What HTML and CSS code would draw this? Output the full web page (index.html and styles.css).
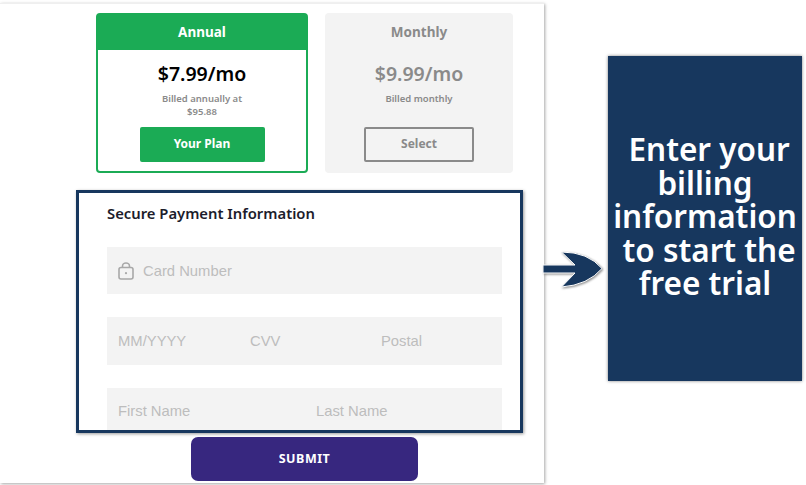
FILE: index.html
```html
<!DOCTYPE html>
<html lang="en">
<head>
    <meta charset="UTF-8">
    <meta name="viewport" content="width=device-width, initial-scale=1.0">
    <title>Secure Payment</title>
    <link rel="stylesheet" href="styles.css">
</head>
<body>
    <div class="checkout">
        <div class="plans">
            <div class="plan plan-active">
                <div class="plan-name">Annual</div>
                <div class="plan-price">$7.99/mo</div>
                <div class="plan-billed">Billed annually at<br>$95.88</div>
                <div class="plan-btn">Your Plan</div>
            </div>
            <div class="plan plan-other">
                <div class="plan-name">Monthly</div>
                <div class="plan-price">$9.99/mo</div>
                <div class="plan-billed">Billed monthly<br>&nbsp;</div>
                <div class="plan-btn">Select</div>
            </div>
        </div>

        <div class="payment">
            <h2 class="payment-title">Secure Payment Information</h2>
            <div class="field field-card">
                <svg class="lock" width="16" height="18" viewBox="0 0 16 18" fill="none" stroke="#a8a8a8" stroke-width="1.6">
                    <rect x="1" y="5.5" width="14" height="11.5" rx="2"/>
                    <path d="M4.5 5.5V4.2a3.5 3.2 0 0 1 7 0v1.3"/>
                    <circle cx="8" cy="11.2" r="1.1" fill="#a8a8a8" stroke="none"/>
                </svg>
                <span>Card Number</span>
            </div>
            <div class="field field-exp">
                <span>MM/YYYY</span>
                <span>CVV</span>
                <span>Postal</span>
            </div>
            <div class="field field-name">
                <span>First Name</span>
                <span>Last Name</span>
            </div>
        </div>

        <div class="submit">SUBMIT</div>
    </div>

    <!-- annotation on top of the screenshot -->
    <div class="highlight"></div>
    <svg class="arrow" width="64" height="42" viewBox="0 0 64 42">
        <path d="M0 16H32L18.500 3Q45 3 59 19.500Q45 36 18.500 38L32 24H0Z" fill="#17375e" stroke="#fff" stroke-width="1"/>
    </svg>
    <div class="note">&nbsp;Enter your<br>billing<br>information<br>&nbsp;to start the<br>free trial</div>
</body>
</html>
```

FILE: styles.css
```css
* {
    margin: 0;
    padding: 0;
    box-sizing: border-box;
}

body {
    width: 806px;
    height: 485px;
    background: white;
    font-family: "Noto Sans", sans-serif;
    position: relative;
    overflow: hidden;
}

.checkout {
    width: 544px;
    height: 480px;
    margin-top: 3px;
    padding-top: 9px;
    background: white;
    border-top: 1px solid #efefef;
    box-shadow: 1px 1px 3px rgba(0,0,0,0.35);
}

.plans {
    display: flex;
    gap: 17px;
    margin-left: 96px;
}

.plan {
    height: 160px;
    border-radius: 4px;
    text-align: center;
    display: flex;
    flex-direction: column;
    align-items: center;
}

.plan-active {
    width: 212px;
    border: 2px solid #1bab55;
}

.plan-other {
    width: 188px;
    background: #f3f3f3;
    color: #8a8a8a;
}

.plan-name {
    width: 100%;
    height: 35px;
    line-height: 34px;
    font-size: 13.500px;
    font-weight: 700;
}

.plan-active .plan-name {
    background: #1bab55;
    color: white;
}

.plan-other .plan-name {
    height: 37px;
    line-height: 38px;
}

.plan-price {
    margin-top: 10px;
    font-size: 19.500px;
    font-weight: 600;
    line-height: 28px;
}

.plan-billed {
    margin-top: 4px;
    height: 29px;
    font-size: 9.500px;
    font-weight: 600;
    line-height: 13px;
    color: #8a8a8a;
}

.plan-btn {
    margin-top: 6px;
    height: 35px;
    line-height: 33px;
    font-size: 12px;
    font-weight: 700;
    border-radius: 2px;
}

.plan-active .plan-btn {
    width: 125px;
    background: #1bab55;
    color: white;
}

.plan-other .plan-btn {
    width: 110px;
    border: 2px solid #8a8a8a;
    line-height: 30px;
}

.payment {
    height: 241px;
    margin-top: 17px;
    padding: 0 42px 0 107px;
    overflow: hidden;
}

.payment-title {
    height: 57px;
    padding-top: 13px;
    font-size: 14.800px;
    font-weight: 600;
    line-height: 20px;
    color: #1c1c2b;
}

.field {
    display: flex;
    align-items: center;
    height: 48px;
    margin-bottom: 23px;
    padding-left: 11px;
    background: #f3f3f3;
    font-family: "Liberation Sans", sans-serif;
    font-size: 14.800px;
    color: #bdbdbd;
}

.field-card {
    height: 47px;
}

.lock {
    margin-right: 9px;
}

.field-exp span:nth-child(1) {
    width: 132px;
}

.field-exp span:nth-child(2) {
    width: 131px;
}

.field-name {
    align-items: flex-start;
    padding-top: 15px;
}

.field-name span:first-child {
    width: 198px;
}

.submit {
    width: 227px;
    height: 44px;
    margin: 6px 0 0 191px;
    background: #37277f;
    border-radius: 7px;
    color: white;
    font-size: 12.500px;
    font-weight: 700;
    letter-spacing: 0.5px;
    line-height: 44px;
    text-align: center;
}

.highlight {
    position: absolute;
    left: 76px;
    top: 190px;
    width: 447px;
    height: 243px;
    border: 3px solid #17375e;
    box-shadow: 1px 1px 3px rgba(0,0,0,0.4);
}

.arrow {
    position: absolute;
    left: 543px;
    top: 249px;
    filter: drop-shadow(1px 1px 1px rgba(0,0,0,0.45));
}

.note {
    position: absolute;
    left: 608px;
    top: 56px;
    width: 194px;
    height: 325px;
    padding-top: 76px;
    background: #17375e;
    box-shadow: 0 0 3px rgba(0,0,0,0.5);
    color: white;
    font-size: 31.500px;
    font-weight: 600;
    line-height: 33.500px;
    text-align: center;
}
```
